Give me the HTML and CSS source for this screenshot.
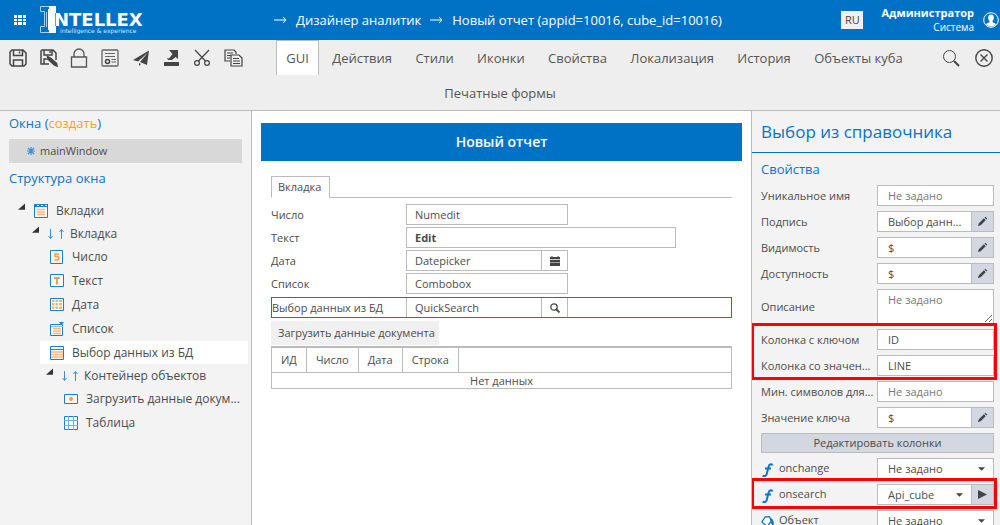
FILE: index.html
```html
<!DOCTYPE html>
<html lang="ru">
<head>
<meta charset="utf-8">
<title>Дизайнер аналитик</title>
<link rel="stylesheet" href="styles.css">
</head>
<body>
<svg class="defs" aria-hidden="true">
  <symbol id="pencil" viewBox="0 0 12 12"><path d="M1 11l1-3 5.500-5.500 2 2L4 10z M8.200 1.800l1-1 2 2-1 1z" fill="#444"/></symbol>
  <symbol id="caret" viewBox="0 0 8 4"><path d="M0 0h8L4 4z" fill="#444"/></symbol>
  <symbol id="func" viewBox="0 0 12 14"><path d="M11 2.500C10.500.800 7.800.600 7 4L5.200 11c-.600 2.300-2.700 2.700-4 1.500M3.500 5.500h6" fill="none" stroke="#0b76cc" stroke-width="2"/></symbol>
  <symbol id="open" viewBox="0 0 8 8"><path d="M8 0v7H0z" fill="#333"/></symbol>
  <symbol id="updown" viewBox="0 0 16 12"><path d="M2.500 1v9M.500 8l2 2.500 2-2.500M13.500 11V2M11.500 4l2-2.500 2 2.500" fill="none" stroke="#3a8fd8"/></symbol>
</svg>

<header class="header">
  <button class="apps" aria-label="Меню"><svg width="12" height="10" viewBox="0 0 12 10" fill="#fff"><path d="M0 0h3v3H0zM4 0h4v3H4zM9 0h3v3H9zM0 4h3v2H0zM4 4h4v2H4zM9 4h3v2H9zM0 7h3v3H0zM4 7h4v3H4zM9 7h3v3H9z"/></svg></button>
  <a class="logo" href="#" aria-label="Intellex">
    <svg width="104" height="28" viewBox="0 0 104 28">
      <path d="M9 0h7v7h-1v13h1v7H9v-3H8V3h1z" fill="#fff"/>
      <path d="M9 .500H.500v5h4v15h-4v6H9M6.500 6v15" fill="none" stroke="#a9d0f0"/>
      <text class="logo-name" x="14" y="20">NTELLEX</text>
      <text class="logo-tag" x="20" y="27">intelligence &amp; experience</text>
    </svg>
  </a>
  <nav class="crumbs">
    <svg class="arrow" width="13" height="8" viewBox="0 0 13 8"><path d="M0 4h12M9 1l3 3-3 3" fill="none" stroke="#fff"/></svg>
    <a href="#">Дизайнер аналитик</a>
    <svg class="arrow" width="13" height="8" viewBox="0 0 13 8"><path d="M0 4h12M9 1l3 3-3 3" fill="none" stroke="#fff"/></svg>
    <a href="#">Новый отчет (appid=10016, cube_id=10016)</a>
  </nav>
  <button class="lang">RU</button>
  <div class="user"><strong>Администратор</strong><span>Система</span></div>
  <button class="avatar" aria-label="Профиль"><svg width="16" height="16" viewBox="0 0 16 16"><circle cx="8" cy="8" r="7.300" fill="none" stroke="#fff"/><path d="M8 2.500c2 0 3 1.300 2.800 3.500-.100 1.500-.800 2.500-1.300 3v1.300c2 .700 3 1.200 3.500 2.200A7 7 0 0 1 3 12.500c.500-1 1.500-1.500 3.500-2.200V9c-.500-.500-1.200-1.500-1.300-3C5 3.800 6 2.500 8 2.500z" fill="#fff"/></svg></button>
</header>

<div class="toolbar">
  <div class="tools">
    <button aria-label="Сохранить"><svg width="18" height="18" viewBox="0 0 18 18" fill="none" stroke="#444" stroke-width="1.500"><path d="M1 3l2-2h11l3 3v11l-2 2H3l-2-2zM4.500 1v5.500h9V1M4.500 17v-6h9v6M10.500 2.500v2"/></svg></button>
    <button aria-label="Сохранить как"><svg width="18" height="18" viewBox="0 0 18 18" fill="none" stroke="#444" stroke-width="1.500"><path d="M9 15H1V2l1-1h11l3 3v7M4 1v5h8V1M4 15v-5h5M10 2v2"/><path d="M7.500 7.500l1 3 6 5.500 2.500 1-.500-2.500-6-5.500z" fill="#444"/></svg></button>
    <button aria-label="Заблокировать"><svg width="18" height="20" viewBox="0 0 18 20" fill="none" stroke="#555"><path d="M1.500 9h15v10h-15zM4 9V6a5 5 0 0 1 10 0v3" stroke-width="1.300"/></svg></button>
    <button aria-label="Сертификат"><svg width="18" height="18" viewBox="0 0 18 18" fill="none" stroke="#666"><rect x="1" y="1" width="16" height="16" rx="1" stroke-width="1.300"/><path d="M4 4.500h10M4 7.500h10M10.500 10.500H15M10.500 13H15"/><circle cx="6.500" cy="12.500" r="2" stroke="#444" stroke-width="1.500"/></svg></button>
    <button aria-label="Отправить"><svg width="18" height="18" viewBox="0 0 18 18" fill="#444"><path d="M17 1.500L1 11l5 1.500L16 3.500 8 13l7 3zM7 14v3l2-2z"/></svg></button>
    <button aria-label="Экспорт"><svg width="18" height="18" viewBox="0 0 18 18" fill="#444"><path d="M1 13h15v4H1zM6 1h9v9l-2.500-2L9 11H5l-1-2 2 .500L9.500 5z"/></svg></button>
    <button aria-label="Вырезать"><svg width="18" height="18" viewBox="0 0 18 18" fill="none" stroke="#444" stroke-width="1.200"><path d="M2 1l10.500 11M16 1L5.500 12"/><circle cx="4" cy="14" r="2.400"/><circle cx="14" cy="14" r="2.400"/></svg></button>
    <button aria-label="Копировать"><svg width="19" height="18" viewBox="0 0 19 18" fill="none" stroke="#444" stroke-width="1.200"><path d="M6 12H1V1h9l2 2v2M3 4h6M3 6.500h4M3 9h3"/><path d="M7 6h8l3 3v8H7z"/><path d="M9 9.500h6M9 12h7M9 14.500h7"/></svg></button>
  </div>
  <div class="tools-right">
    <button aria-label="Поиск"><svg width="18" height="18" viewBox="0 0 18 18" fill="none" stroke="#444"><circle cx="7.500" cy="7.500" r="6"/><path d="M12 12l5 5" stroke-width="2"/></svg></button>
    <button aria-label="Закрыть"><svg width="18" height="18" viewBox="0 0 18 18" fill="none" stroke="#444" stroke-width="1.400"><circle cx="9" cy="9" r="8.200"/><path d="M5.500 5.500l7 7M12.500 5.500l-7 7"/></svg></button>
  </div>
  <nav class="tabs">
    <a class="active" href="#">GUI</a>
    <a href="#">Действия</a>
    <a href="#">Стили</a>
    <a href="#">Иконки</a>
    <a href="#">Свойства</a>
    <a href="#">Локализация</a>
    <a href="#">История</a>
    <a href="#">Объекты куба</a>
    <a href="#">Печатные формы</a>
  </nav>
</div>

<div class="workspace">
  <aside class="left">
    <h2>Окна (<a class="create" href="#">создать</a>)</h2>
    <a class="window" href="#"><svg width="8" height="8" viewBox="0 0 8 8"><path d="M4 0v8M0 4h8M1 1l6 6M7 1L1 7" stroke="#3a8fd8" stroke-width="1.200"/></svg>mainWindow</a>
    <h2>Структура окна</h2>
    <ul class="tree">
      <li>
        <div class="node parent"><svg class="toggle"><use href="#open"/></svg>
          <svg class="ico" viewBox="0 0 14 14"><path d="M.500.500h13v13H.500z" fill="#fff" stroke="#1a7fcb"/><path d="M0 0h14v3H0z" fill="#1a7fcb"/><path d="M3 1h2v1H3zM7 1h2v1H7zM11 1h2v1h-2z" fill="#fff"/><path d="M3 5.500h8M3 8h8M3 10.500h8" stroke="#f9b57c" stroke-width="1.500"/></svg><span>Вкладки</span></div>
        <ul>
          <li>
            <div class="node parent"><svg class="toggle"><use href="#open"/></svg><svg class="pair"><use href="#updown"/></svg><span>Вкладка</span></div>
            <ul class="items">
              <li><div class="node"><svg class="ico" viewBox="0 0 14 14"><path d="M.500.500h12v13H.500z" fill="#fff3e8" stroke="#1a7fcb"/><path d="M9 4H5v2.500h2.500a1.800 1.800 0 0 1 0 3.500H4.500" fill="none" stroke="#f79a4b" stroke-width="1.500"/></svg><span>Число</span></div></li>
              <li><div class="node"><svg class="ico" viewBox="0 0 14 14"><path d="M.500.500h13v12H.500z" fill="#fff" stroke="#1a7fcb"/><path d="M4 4h6M7 4v6.500" stroke="#f79a4b" stroke-width="2"/></svg><span>Текст</span></div></li>
              <li><div class="node"><svg class="ico" viewBox="0 0 14 14"><path d="M.500.500h13v12H.500z" fill="#fff" stroke="#1a7fcb"/><path d="M2 2h10v9H2z" fill="#f9b57c"/><path d="M5 2v9M8.500 2v9M2 4.500h10M2 8h10" stroke="#fff"/></svg><span>Дата</span></div></li>
              <li><div class="node"><svg class="ico" viewBox="0 0 14 14"><path d="M.500 2.500h12v11H.500z" fill="#fff" stroke="#1a7fcb"/><path d="M1 4.500h12" stroke="#8fc0e8"/><path d="M9 0h5l-2.500 3z" fill="#1a7fcb"/><path d="M3 6.500h8M3 9h8M3 11.500h8" stroke="#f9b57c" stroke-width="1.300"/></svg><span>Список</span></div></li>
              <li><div class="node selected"><svg class="ico" viewBox="0 0 14 14"><path d="M.500.500h13v13H.500z" fill="#fff" stroke="#1a7fcb"/><path d="M1 3.500h12" stroke="#1a7fcb"/><path d="M1 6h12M1 8.500h12M1 11h12" stroke="#f9b57c" stroke-width="1.300"/></svg><span>Выбор данных из БД</span></div></li>
              <li>
                <div class="node parent"><svg class="toggle"><use href="#open"/></svg><svg class="pair"><use href="#updown"/></svg><span>Контейнер объектов</span></div>
                <ul>
                  <li><div class="node"><svg class="ico" viewBox="0 0 14 14"><path d="M.500 2.500h13v9H.500z" fill="#fff" stroke="#1a7fcb"/><circle cx="7" cy="7" r="2" fill="#f79a4b"/></svg><span>Загрузить данные докум...</span></div></li>
                  <li><div class="node"><svg class="ico" viewBox="0 0 14 14"><path d="M.500.500h13v13H.500z" fill="#fff" stroke="#1a7fcb"/><path d="M4.500 0v14M9.500 0v14M0 4.500h14M0 9.500h14" stroke="#6db0e3"/></svg><span>Таблица</span></div></li>
                </ul>
              </li>
            </ul>
          </li>
        </ul>
      </li>
    </ul>
  </aside>

  <main class="center">
    <h1>Новый отчет</h1>
    <div class="form">
      <div class="form-tabs"><button class="form-tab">Вкладка</button></div>
      <div class="field"><label for="num">Число</label><div class="control"><input id="num" value="Numedit"></div></div>
      <div class="field"><label for="edit">Текст</label><div class="control wide"><input id="edit" class="bold" value="Edit"></div></div>
      <div class="field"><label for="date">Дата</label><div class="control"><input id="date" value="Datepicker"><button aria-label="Календарь"><svg width="10" height="10" viewBox="0 0 10 10" fill="#444"><path d="M0 1h1.500V0h1v1h5V0h1v1H10v2.200H0zM0 4h10v2.500H0zM0 7h10v3H0z"/></svg></button></div></div>
      <div class="field"><label for="combo">Список</label><div class="control"><input id="combo" value="Combobox"></div></div>
      <div class="field current"><label for="quick">Выбор данных из БД</label><div class="control"><input id="quick" value="QuickSearch"><button aria-label="Найти"><svg width="10" height="10" viewBox="0 0 10 10" fill="none" stroke="#444"><circle cx="4" cy="4" r="3.200" stroke-width="1.300"/><path d="M6.500 6.500l3 3" stroke-width="1.800"/></svg></button></div></div>
      <button class="load">Загрузить данные документа</button>
      <table class="grid">
        <thead><tr><th>ИД</th><th>Число</th><th>Дата</th><th>Строка</th><th class="rest"></th></tr></thead>
        <tbody><tr><td colspan="5">Нет данных</td></tr></tbody>
      </table>
    </div>
  </main>

  <aside class="right">
    <h2 class="title">Выбор из справочника</h2>
    <div class="props">
      <h3>Свойства</h3>
      <div class="prop"><label for="p1">Уникальное имя</label><div class="box"><input id="p1" placeholder="Не задано"></div></div>
      <div class="prop"><label for="p2">Подпись</label><div class="box"><input id="p2" value="Выбор данн..."><button aria-label="Изменить"><svg width="11" height="11"><use href="#pencil"/></svg></button></div></div>
      <div class="prop"><label for="p3">Видимость</label><div class="box"><input id="p3" value="$"><button aria-label="Изменить"><svg width="11" height="11"><use href="#pencil"/></svg></button></div></div>
      <div class="prop"><label for="p4">Доступность</label><div class="box"><input id="p4" value="$"><button aria-label="Изменить"><svg width="11" height="11"><use href="#pencil"/></svg></button></div></div>
      <div class="prop"><label for="p5">Описание</label><div class="box"><textarea id="p5" placeholder="Не задано"></textarea></div></div>
      <div class="marked">
        <div class="prop"><label for="p6">Колонка с ключом</label><div class="box"><input id="p6" value="ID"></div></div>
        <div class="prop"><label for="p7">Колонка со значен...</label><div class="box"><input id="p7" value="LINE"></div></div>
      </div>
      <div class="prop"><label for="p8">Мин. символов для...</label><div class="box"><input id="p8" placeholder="Не задано"></div></div>
      <div class="prop"><label for="p9">Значение ключа</label><div class="box"><input id="p9" value="$"><button aria-label="Изменить"><svg width="11" height="11"><use href="#pencil"/></svg></button></div></div>
      <button class="columns">Редактировать колонки</button>
      <div class="prop"><label for="p10"><svg class="fn"><use href="#func"/></svg>onchange</label><div class="box"><div class="pick"><select id="p10"><option>Не задано</option></select><svg class="caret"><use href="#caret"/></svg></div></div></div>
      <div class="marked">
        <div class="prop"><label for="p11"><svg class="fn"><use href="#func"/></svg>onsearch</label><div class="box"><div class="pick"><select id="p11"><option>Api_cube</option></select><svg class="caret"><use href="#caret"/></svg></div><button aria-label="Перейти"><svg width="9" height="9" viewBox="0 0 8 8"><path d="M0 0l8 4-8 4z" fill="#444"/></svg></button></div></div>
      </div>
      <div class="prop"><label for="p12"><svg class="fn" viewBox="0 0 14 14"><path d="M4.500 1.500L9 1.200l2.500 4.300-5 6.500-5.500-5z" fill="#fff" stroke="#0b76cc" stroke-width="1.400"/><path d="M9.500 2.500c3.500 1 5 4.500 4 9L10.500 8z" fill="#0b76cc"/></svg>Объект</label><div class="box"><div class="pick"><select id="p12"><option>Не задано</option></select><svg class="caret"><use href="#caret"/></svg></div></div></div>
    </div>
  </aside>
</div>
</body>
</html>
```
FILE: styles.css
```css
* { box-sizing: border-box; }
body {
  margin: 0;
  height: 100vh;
  display: flex;
  flex-direction: column;
  overflow: hidden;
  font: 11px/16px "Open Sans", "Noto Sans", sans-serif;
  color: #4c4c4c;
  background: #fff;
}
a { color: inherit; text-decoration: none; }
button, input, select, textarea { font: inherit; color: inherit; margin: 0; }
button { border: 0; padding: 0; background: none; cursor: pointer; }
button svg { display: block; }
ul { list-style: none; margin: 0; padding: 0; }
h1, h2, h3 { margin: 0; font-weight: 400; }
.defs { display: none; }

.header {
  flex: none;
  display: flex;
  align-items: center;
  height: 40px;
  padding-left: 14px;
  background: #0072c6;
  color: #fff;
}
.logo { margin-left: 14px; }
.logo svg { display: block; }
.logo-name { font: bold 18px "DejaVu Sans", sans-serif; fill: #fff; }
.logo-tag { font: 6px "DejaVu Sans", sans-serif; fill: #cfe6f8; }
.crumbs {
  flex: 1;
  display: flex;
  align-items: center;
  gap: 9px;
  margin-left: 130px;
  font-size: 13px;
  white-space: nowrap;
}
.lang { width: 22px; height: 18px; background: #f0f0f0; color: #444; line-height: 18px; }
.user { display: flex; flex-direction: column; align-items: flex-end; margin: 0 9px 0 18px; line-height: 14px; }
.user span { font-size: 10px; }
.avatar { margin-right: 1px; }

.toolbar { flex: none; background: #eee; border-bottom: 1px solid #bbb; }
.tools { float: left; display: flex; justify-content: space-between; align-items: center; width: 252px; height: 35px; padding: 0 9px; }
.tools-right { float: right; display: flex; justify-content: space-between; align-items: center; width: 63px; height: 35px; padding: 0 7px 0 5px; }
.tabs { text-align: center; font-size: 13px; line-height: 34px; color: #555; }
.tabs a { display: inline-block; vertical-align: top; padding: 0 9px; border: 1px solid transparent; border-bottom: 0; }
.tabs .active { background: #fff; border-color: #bbb; }

.workspace { flex: 1; min-height: 0; display: flex; }
.left, .right { flex: none; background: #f3f3f3; overflow: hidden; }
.left { width: 252px; border-right: 1px solid #bbb; padding: 3px 3px 0 9px; }
.left h2, .right h3 { font-size: 13px; line-height: 18px; color: #0b72c4; }
.create { color: #ffa014; }
.window {
  display: flex;
  align-items: center;
  gap: 5px;
  height: 24px;
  margin: 7px 6px 6px 0;
  padding-left: 18px;
  background: #d8d8d8;
}
.tree { margin-top: 12px; padding-left: 9px; font-size: 12px; }
.tree ul { padding-left: 14px; }
.tree .items, .items ul { padding-left: 8px; }
.node { display: flex; align-items: center; height: 24px; padding-left: 10px; }
.node span { min-width: 0; white-space: nowrap; }
.node.parent { height: 23px; padding-left: 0; }
.node.selected { height: 23px; background: #fff; }
.items .node.parent { padding-left: 6px; }
.items .items-sub, .items ul { padding-left: 14px; }
.toggle { width: 7px; height: 8px; margin-right: 9px; flex: none; align-self: flex-start; margin-top: 4px; }
.ico { width: 14px; height: 14px; margin-right: 8px; flex: none; }
.pair { width: 16px; height: 12px; margin-right: 6px; flex: none; }

.center { flex: 1; min-width: 0; padding: 12px 9px 0; overflow: hidden; }
.center h1 { background: #0072c6; color: #fff; text-align: center; font-size: 14px; font-weight: 600; line-height: 38px; }
.form { padding: 15px 10px 0; }
.form-tabs { display: flex; border-bottom: 1px solid #bbb; margin-bottom: 6px; }
.form-tab { height: 22px; margin-bottom: -1px; padding: 0 8px 0 6px; border: 1px solid #bbb; border-bottom: 1px solid #fff; background: #fff; }
.field { display: flex; align-items: center; height: 21px; margin-bottom: 2px; }
.field label { width: 135px; flex: none; white-space: nowrap; }
.control { display: flex; width: 162px; height: 21px; border: 1px solid #bbb; }
.control.wide { width: 270px; }
.control input { flex: 1; min-width: 0; border: 0; padding: 0 8px; background: #fff; }
.control .bold { font-weight: 700; }
.control button { width: 26px; border-left: 1px solid #bbb; display: grid; place-items: center; }
.field.current { border: 1px solid #0b76cc; margin-top: 3px; }
.field.current label { width: 134px; }
.field.current .control { height: 19px; border-width: 0 1px; }
.load { display: block; height: 24px; margin: 3px 0 1px; padding: 0 4px 0 7px; background: #f0f0f0; }
.grid { width: 100%; border-collapse: collapse; border: 1px solid #bbb; border-top-width: 2px; }
.grid th, .grid td { border: 1px solid #bbb; font-weight: 400; padding: 0 9px; white-space: nowrap; line-height: 15px; }
.grid th { height: 25px; border-top-width: 2px; }
.grid .rest { width: 100%; }
.grid td { text-align: center; }

.right { width: 249px; border-left: 1px solid #bbb; }
.title { padding: 0 9px; font-size: 17px; line-height: 41px; color: #0b72c4; border-bottom: 1px solid #0072c6; white-space: nowrap; }
.props { display: flex; flex-direction: column; gap: 5px; padding: 7px 6px 0 9px; }
.right h3 { margin-bottom: 2px; }
.prop { display: grid; grid-template-columns: minmax(0, 1fr) 117px; column-gap: 3px; align-items: center; }
.prop label { white-space: nowrap; }
.box { display: flex; min-height: 21px; border: 1px solid #bbb; background: #fff; }
.box input, .box select, .box textarea { flex: 1; min-width: 0; width: 100%; border: 0; background: none; padding: 0 10px; outline: 0; }
.box textarea { display: block; height: 33px; padding-top: 2px; resize: vertical; }
.box ::placeholder { color: #777; opacity: 1; }
.box select { appearance: none; height: 19px; }
.box button { width: 22px; flex: none; display: grid; place-items: center; background: #d3d7e1; border-left: 1px solid #bbb; }
.pick { flex: 1; min-width: 0; display: grid; align-items: center; }
.pick > * { grid-area: 1 / 1; }
.caret { width: 7px; height: 4px; justify-self: end; margin-right: 8px; pointer-events: none; }
.columns { height: 20px; background: #d3d7e1; border: 1px solid #bbb; }
.fn { width: 13px; height: 14px; margin-right: 5px; vertical-align: middle; }
.marked { position: relative; display: flex; flex-direction: column; gap: 5px; }
.marked::after { content: ""; position: absolute; inset: -6px -3px -4px -10px; border: 3px solid #f00; pointer-events: none; }
```
